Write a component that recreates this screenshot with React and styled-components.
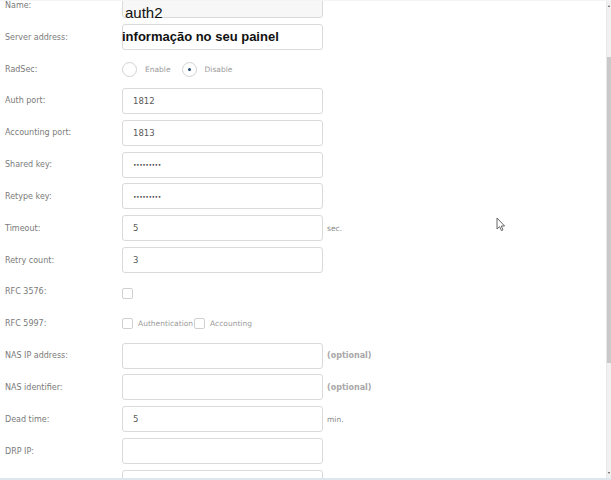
import React from "react";
import styled, { createGlobalStyle } from "styled-components";

const GlobalStyle = createGlobalStyle`
  html, body { margin: 0; padding: 0; background: #ffffff; overflow: hidden; }
  #root { width: 611px; height: 480px; }
`;

const Frame = styled.div`
  position: relative;
  width: 611px;
  height: 480px;
  box-sizing: border-box;
  display: flex;
  border-top: 1px solid #f2f4f6;
  border-bottom: 2px solid #dfe6ec;
  overflow: hidden;
  background: #fff;
`;

const Main = styled.div`
  flex: 1;
  overflow: hidden;
`;

const Form = styled.div`
  display: grid;
  grid-template-columns: 117px 201px auto;
  grid-auto-rows: 31.85px;
  align-items: center;
  padding-left: 5px;
  margin-top: -11.6px;
  font-family: "DejaVu Sans", Verdana, sans-serif;
`;

const Label = styled.div`
  font-size: 8px;
  color: #7a7a7a;
  white-space: nowrap;
`;

const Field = styled.div`
  box-sizing: border-box;
  height: 26px;
  border: 1px solid #dadada;
  border-radius: 3px;
  background: ${(p) => (p.$disabled ? "#f7f7f7" : "#ffffff")};
  display: flex;
  align-items: center;
  padding-left: 10px;
  font-size: 8.5px;
  color: #5a5a5a;
`;

const Dots = styled.span`
  font-size: 6px;
  letter-spacing: -0.45px;
  color: #444;
`;

const Suffix = styled.div`
  padding-left: 4px;
  font-size: ${(p) => (p.$bold ? "8px" : "7.5px")};
  color: ${(p) => (p.$light ? "#a8a8a8" : "#888")};
  font-weight: ${(p) => (p.$bold ? 700 : 400)};
  white-space: nowrap;
`;

const Controls = styled.div`
  display: flex;
  align-items: center;
  font-size: 7.5px;
  color: #9a9a9a;
  white-space: nowrap;
`;

const Radio = styled.span`
  box-sizing: border-box;
  width: 15px;
  height: 15px;
  border-radius: 50%;
  border: 1px solid #d2d2d2;
  background: #fff;
  display: inline-flex;
  align-items: center;
  justify-content: center;
  margin-right: 8px;
  margin-left: ${(p) => (p.$first ? "0" : "11px")};
  &::after {
    content: "";
    width: 3px;
    height: 3px;
    border-radius: 50%;
    background: ${(p) => (p.$checked ? "#23496e" : "transparent")};
  }
`;

const Check = styled.span`
  box-sizing: border-box;
  width: 11px;
  height: 11px;
  border: 1px solid #d0d0d0;
  border-radius: 2px;
  background: #fff;
  margin-right: 5px;
  margin-top: ${(p) => (p.$low ? "4px" : "0")};
`;

const Scrollbar = styled.div`
  width: 5px;
  box-sizing: border-box;
  border-left: 1px solid #e8e8e8;
  background: #f1f1f1;
  display: flex;
  flex-direction: column;
  align-items: center;
`;

const Arrow = styled.span`
  width: 0;
  height: 0;
  border-left: 1.5px solid transparent;
  border-right: 1.5px solid transparent;
  ${(p) =>
    p.$down
      ? "border-top: 2px solid #555; margin-top: auto; margin-bottom: 4px;"
      : "border-bottom: 2px solid #555; margin-top: 4px;"}
`;

const Thumb = styled.div`
  width: 100%;
  height: 306px;
  margin-top: 50px;
  background: #c9c9c9;
`;

const Overlay = styled.div`
  position: absolute;
  left: ${(p) => p.$x}px;
  top: ${(p) => p.$y}px;
  font-family: "Liberation Sans", Arial, sans-serif;
  font-size: ${(p) => p.$size}px;
  font-weight: ${(p) => (p.$bold ? 700 : 400)};
  color: #111;
  white-space: nowrap;
  line-height: 1;
`;

const Cursor = styled.svg`
  position: absolute;
  left: 496px;
  top: 216px;
`;

const rows = [
  { label: "Name:", value: "", disabled: true },
  { label: "Server address:", value: "" },
  { label: "RadSec:", type: "radio" },
  { label: "Auth port:", value: "1812" },
  { label: "Accounting port:", value: "1813" },
  { label: "Shared key:", type: "password" },
  { label: "Retype key:", type: "password" },
  { label: "Timeout:", value: "5", suffix: "sec." },
  { label: "Retry count:", value: "3" },
  { label: "RFC 3576:", type: "check1" },
  { label: "RFC 5997:", type: "check2" },
  { label: "NAS IP address:", value: "", suffix: "(optional)", optional: true },
  { label: "NAS identifier:", value: "", suffix: "(optional)", optional: true },
  { label: "Dead time:", value: "5", suffix: "min." },
  { label: "DRP IP:", value: "" },
  { label: "", value: "" },
];

function Control({ row }) {
  if (row.type === "radio") {
    return (
      <Controls>
        <Radio $first />
        Enable
        <Radio $checked />
        Disable
      </Controls>
    );
  }
  if (row.type === "check1") {
    return (
      <Controls>
        <Check $low />
      </Controls>
    );
  }
  if (row.type === "check2") {
    return (
      <Controls>
        <Check />
        Authentication
        <Check style={{ marginLeft: 1 }} />
        Accounting
      </Controls>
    );
  }
  if (row.type === "password") {
    return (
      <Field>
        <Dots>•••••••••</Dots>
      </Field>
    );
  }
  return <Field $disabled={row.disabled}>{row.value}</Field>;
}

export default function App() {
  return (
    <>
      <GlobalStyle />
      <Frame>
        <Main>
          <Form>
            {rows.map((row, i) => (
              <React.Fragment key={i}>
                <Label>{row.label}</Label>
                <Control row={row} />
                <Suffix $bold={row.optional} $light={row.optional}>
                  {row.suffix || ""}
                </Suffix>
              </React.Fragment>
            ))}
          </Form>
        </Main>
        <Scrollbar>
          <Arrow />
          <Thumb />
          <Arrow $down />
        </Scrollbar>
        <Overlay $x={125} $y={4} $size={15}>
          auth2
        </Overlay>
        <Overlay $x={122} $y={29} $size={13} $bold>
          informação no seu painel
        </Overlay>
        <Cursor width="10" height="15" viewBox="0 0 10 15">
          <path
            d="M1 1 L1 12 L3.6 9.6 L5.4 13.6 L7 12.9 L5.3 9 L8.6 9 Z"
            fill="#ffffff"
            stroke="#555"
            strokeWidth="0.9"
            strokeLinejoin="round"
          />
        </Cursor>
      </Frame>
    </>
  );
}
